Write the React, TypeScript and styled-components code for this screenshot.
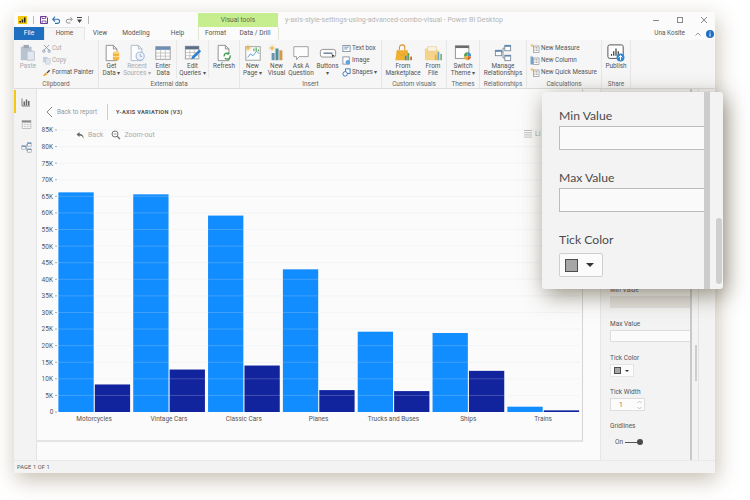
import React from 'react'
import styled, {createGlobalStyle} from 'styled-components'

const GlobalStyle = createGlobalStyle`
  html, body {
    margin: 0;
    background: #fff;
  }
  body {
    font-family: Roboto, "Liberation Sans", sans-serif;
    color: #555;
  }
`

const Stage = styled.div`
  width: 750px;
  height: 500px;
  padding: 12px 35px 27px 14px;
  box-sizing: border-box;
  overflow: hidden;
`

const Win = styled.div`
  position: relative;
  height: 100%;
  display: flex;
  flex-direction: column;
  background: #fbfbfb;
  box-shadow: 2px 7px 20px rgba(125, 105, 75, 0.42);
`

const TitleBar = styled.div`
  height: 15px;
  display: flex;
  align-items: stretch;
  flex: none;
`

const Quick = styled.div`
  width: 184px;
  padding-left: 4px;
  display: flex;
  align-items: center;
  gap: 4px;
  box-sizing: border-box;
`

const QuickBar = styled.span`
  width: 1px;
  height: 8px;
  margin: 0 2px;
  background: #bbb;
`

const ToolsTab = styled.div`
  width: 80px;
  margin-top: 1px;
  background: #c6ee8f;
  color: #5b6b4a;
  font-size: 6.6px;
  text-align: center;
  line-height: 15px;
`

const WinTitle = styled.div`
  width: 218px;
  padding-left: 7px;
  color: #b5b5b5;
  font-size: 7.05px;
  line-height: 15px;
  white-space: nowrap;
  box-sizing: border-box;
`

const Controls = styled.div`
  flex: 1;
  display: flex;
  justify-content: flex-end;
  align-items: center;
  gap: 16px;
  padding-right: 7px;
`

const TabRow = styled.div`
  height: 13px;
  display: flex;
  flex: none;
  font-size: 6.6px;
  line-height: 13px;
`

const Tab = styled.div<{$w: number; $active?: boolean; $file?: boolean}>`
  width: ${({$w}) => $w}px;
  text-align: center;
  color: ${({$file}) => ($file ? '#fff' : '#555')};
  background: ${({$active, $file}) => ($file ? '#1f6fc1' : $active ? '#f6f6f6' : 'transparent')};
  box-shadow: ${({$active}) => ($active ? 'inset 1px 1px 0 #e6e6e6, inset -1px 0 0 #e6e6e6' : 'none')};
`

const ToolTabs = styled.div`
  display: flex;
  border-left: 1px solid #dfe8d2;
  border-right: 1px solid #dfe8d2;
`

const User = styled.div`
  flex: 1;
  display: flex;
  justify-content: flex-end;
  align-items: center;
  gap: 5px;
  padding-right: 1px;
  font-size: 6.4px;
  color: #555;
`

const UserName = styled.span`
  margin-right: 5px;
`

const Ribbon = styled.div`
  height: 49px;
  display: flex;
  flex: none;
  background: #f6f6f6;
  border-bottom: 1px solid #dcdcdc;
  box-sizing: border-box;
`

const Group = styled.div<{$w: number}>`
  width: ${({$w}) => $w}px;
  flex: none;
  display: flex;
  flex-direction: column;
  border-right: 1px solid #e6e6e6;
  box-sizing: content-box;
`

const GroupBody = styled.div`
  flex: 1;
  display: flex;
  min-height: 0;
`

const GroupLabel = styled.div`
  height: 10px;
  font-size: 6.4px;
  line-height: 12px;
  text-align: center;
  color: #666;
  white-space: nowrap;
`

const Big = styled.div<{$w: number; $dim?: boolean; $rule?: boolean}>`
  width: ${({$w}) => $w}px;
  flex: none;
  padding-top: 4px;
  display: flex;
  flex-direction: column;
  align-items: center;
  box-sizing: border-box;
  font-size: 6.4px;
  line-height: 7.4px;
  text-align: center;
  white-space: nowrap;
  color: ${({$dim}) => ($dim ? '#aaa' : '#555')};
  border-left: ${({$rule}) => ($rule ? '1px solid #e8e8e8' : 'none')};
  svg {
    flex: none;
    margin-bottom: 1px;
  }
`

const SmallList = styled.div<{$w: number; $pad?: number}>`
  width: ${({$w}) => $w}px;
  flex: none;
  padding: 2px 0 0 ${({$pad}) => $pad ?? 0}px;
  box-sizing: border-box;
`

const SmallItem = styled.div<{$dim?: boolean}>`
  height: 12px;
  display: flex;
  align-items: center;
  gap: 1px;
  font-size: 6.3px;
  white-space: nowrap;
  color: ${({$dim}) => ($dim ? '#aaa' : '#555')};
`

const Main = styled.div`
  flex: 1;
  display: flex;
  min-height: 0;
`

const Nav = styled.div`
  width: 23px;
  flex: none;
  padding-top: 1px;
  background: #f3f3f3;
  display: flex;
  flex-direction: column;
  align-items: center;
  border-right: 1px solid #e4e4e4;
  box-sizing: border-box;
`

const NavItem = styled.div<{$active?: boolean}>`
  width: 100%;
  height: 23px;
  display: flex;
  align-items: center;
  justify-content: center;
  box-sizing: border-box;
  border-left: 2px solid ${({$active}) => ($active ? '#f2c811' : 'transparent')};
`

const Canvas = styled.div`
  width: 563px;
  flex: none;
`

const Frame = styled.div`
  width: 546px;
  height: 353px;
  display: flex;
  flex-direction: column;
  border-right: 1px solid #d4d4d4;
  border-bottom: 2px solid #e4e4e4;
  box-sizing: border-box;
`

const Crumb = styled.div`
  height: 36px;
  flex: none;
  display: flex;
  align-items: center;
  padding: 10px 0 0 9px;
  box-sizing: border-box;
  font-size: 6.4px;
  color: #999;
`

const CrumbBack = styled.svg`
  margin-right: 4px;
`

const CrumbRule = styled.span`
  width: 1px;
  height: 16px;
  margin: 0 8px 0 10px;
  background: #ccc;
`

const CrumbTitle = styled.span`
  font-size: 5.6px;
  font-weight: 700;
  letter-spacing: 0.3px;
  color: #555;
`

const ChartArea = styled.div`
  position: relative;
  flex: 1;
  min-height: 0;
`

const ChartTools = styled.div`
  position: absolute;
  left: 39px;
  top: 5px;
  display: flex;
  align-items: center;
  gap: 3px;
  font-size: 7px;
  color: #aaa;
`

const ChartToolGap = styled.span`
  width: 2px;
`

const LegendTool = styled.div`
  position: absolute;
  left: 487px;
  top: 5px;
  display: flex;
  align-items: center;
  gap: 3px;
  font-size: 7px;
  color: #aaa;
`

const PanelWrap = styled.div`
  flex: 1;
  display: flex;
  background: #f3f3f3;
  border-left: 1px solid #e6e6e6;
`

const Pane = styled.div`
  width: 89px;
  flex: none;
  padding: 196px 0 0 9px;
  box-sizing: border-box;
  font-size: 6.5px;
  color: #555;
`

const PaneLabel = styled.div`
  height: 10px;
  line-height: 10px;
  margin-bottom: 1px;
`

const PaneInput = styled.div<{$shade?: boolean}>`
  height: 12px;
  margin-bottom: 11px;
  border: 1px solid #dedede;
  border-right: 0;
  background: ${({$shade}) => ($shade ? '#e3e1dc' : '#fbfbfb')};
  box-sizing: border-box;
`

const SwatchButton = styled.div`
  width: 24px;
  height: 13px;
  display: flex;
  align-items: center;
  gap: 4px;
  padding-left: 3px;
  margin-bottom: 10px;
  background: #fcfcfc;
  border: 1px solid #e4e4e4;
  box-sizing: border-box;
`

const Swatch = styled.span<{$big?: boolean}>`
  width: ${({$big}) => ($big ? 13 : 7)}px;
  height: ${({$big}) => ($big ? 13 : 7)}px;
  background: #a6a6a6;
  border: 1px solid #4c4c4c;
  box-sizing: border-box;
`

const Caret = styled.span<{$big?: boolean}>`
  width: 0;
  height: 0;
  border-left: ${({$big}) => ($big ? 4 : 2)}px solid transparent;
  border-right: ${({$big}) => ($big ? 4 : 2)}px solid transparent;
  border-top: ${({$big}) => ($big ? 4 : 2)}px solid #333;
`

const Spinner = styled.div`
  width: 35px;
  height: 13px;
  display: flex;
  align-items: center;
  justify-content: space-between;
  padding: 0 2px 0 8px;
  margin-bottom: 10px;
  background: #fcfcfc;
  border: 1px solid #dedede;
  box-sizing: border-box;
  color: #c0604a;
  font-size: 6.8px;
`

const ToggleRow = styled.div`
  display: flex;
  align-items: center;
  line-height: 10px;
  padding: 5px 0 0 5px;
  gap: 2px;
`

const ToggleLine = styled.span`
  width: 13px;
  height: 1px;
  background: #555;
`

const ToggleKnob = styled.span`
  width: 6px;
  height: 6px;
  margin-left: -3px;
  border-radius: 50%;
  background: #4a4a4a;
`

const PaneStrip = styled.div`
  width: 2px;
  flex: none;
  background: #c9c9c9;
`

const PaneTrack = styled.div`
  width: 7px;
  flex: none;
  padding: 256px 1px 0 3px;
  border-right: 1px solid #e2e2e2;
  box-sizing: border-box;
`

const PaneThumb = styled.div`
  height: 36px;
  background: #cdcdcd;
`

const StatusBar = styled.div`
  height: 12px;
  flex: none;
  padding-left: 3px;
  font-size: 5.7px;
  line-height: 12px;
  letter-spacing: 0.1px;
  color: #555;
  background: #f3f3f3;
  border-top: 1px solid #e8e8e8;
`

const Popup = styled.div`
  position: absolute;
  left: 528px;
  top: 80px;
  width: 181px;
  height: 197px;
  display: flex;
  background: #f3f3f3;
  border-radius: 3px;
  box-shadow: 3px 6px 22px rgba(70, 60, 35, 0.55);
  overflow: hidden;
`

const PopupBody = styled.div`
  width: 162px;
  flex: none;
  padding: 14px 0 0 17px;
  box-sizing: border-box;
`

const PopupLabel = styled.div`
  height: 19px;
  font-family: Lato, Roboto, sans-serif;
  font-size: 12.2px;
  line-height: 19px;
  color: #4b4b4b;
`

const PopupInput = styled.div`
  height: 24px;
  margin: 1px 0 18px;
  background: #fafafa;
  border: 1px solid #bcbcbc;
  border-right: 0;
  box-sizing: border-box;
`

const PopupSwatchButton = styled.div`
  width: 44px;
  height: 24px;
  margin-top: 4px;
  padding-left: 5px;
  display: flex;
  align-items: center;
  gap: 8px;
  background: #fbfbfb;
  border: 1px solid #cfcfcf;
  border-radius: 2px;
  box-sizing: border-box;
`

const PopupStrip = styled.div`
  width: 6px;
  flex: none;
  background: #cccccc;
`

const PopupTrack = styled.div`
  flex: 1;
  display: flex;
  flex-direction: column;
  justify-content: flex-end;
  padding: 0 1px 5px 6px;
`

const PopupThumb = styled.div`
  height: 66px;
  border-radius: 3px;
  background: #cfcfcf;
`

const data = [
  {name: 'Motorcycles', a: 66.2, b: 8.3},
  {name: 'Vintage Cars', a: 65.6, b: 12.8},
  {name: 'Classic Cars', a: 59.2, b: 14},
  {name: 'Planes', a: 43, b: 6.6},
  {name: 'Trucks and Buses', a: 24.2, b: 6.3},
  {name: 'Ships', a: 23.8, b: 12.4},
  {name: 'Trains', a: 1.6, b: 0.5},
]

const ticks = Array.from({length: 18}, (_, i) => i * 5)

// chart svg starts at page x=37, y=125
const X0 = 21.4
const Y0 = 287
const STEP = 74.83
const yFor = (v: number) => Y0 - v * 3.318

const Chart = () => (
  <svg width={545} height={315} style={{display: 'block'}} fontFamily="Roboto, sans-serif" fontSize={6.5} fill="#555">
    {data.map((d, i) => (
      <g key={d.name}>
        <rect x={X0 + i * STEP} y={yFor(d.a)} width={35.3} height={Y0 - yFor(d.a)} fill="#118dff" />
        <rect x={X0 + 36.4 + i * STEP} y={yFor(d.b)} width={35.3} height={Y0 - yFor(d.b)} fill="#12239e" />
        <text x={X0 + 35.7 + i * STEP} y={295.5} textAnchor="middle">
          {d.name}
        </text>
      </g>
    ))}
    {ticks.map(t => (
      <g key={t}>
        {t > 0 && <line x1={21} x2={543} y1={yFor(t)} y2={yFor(t)} stroke="#d8e0e8" strokeOpacity={0.3} strokeWidth={0.8} />}
        <line x1={18} x2={20} y1={yFor(t)} y2={yFor(t)} stroke="#888" strokeWidth={0.7} />
        <text x={t === 0 ? 16.5 : 16} y={yFor(t) + 2.4} textAnchor="end">
          {t === 0 ? '0' : `${t}K`}
        </text>
      </g>
    ))}
  </svg>
)

const S = ({size = 18, children}: {size?: number; children: React.ReactNode}) => (
  <svg width={size} height={size} viewBox="0 0 20 20" fill="none" strokeWidth={1}>
    {children}
  </svg>
)

const Doc = ({stroke = '#8a8a8a'}: {stroke?: string}) => <path d="M3.500 1.500h8l4 4v13h-12z M11.500 1.500v4h4" stroke={stroke} fill="#fdfdfd" />

const PasteIcon = () => (
  <S>
    <rect x="2" y="3" width="12" height="15" fill="#b9c2cf" />
    <rect x="5" y="1" width="6" height="3.500" fill="#9ca7b6" />
    <path d="M9 8h8v10H9z" fill="#e3e8f0" stroke="#b9c2cf" />
  </S>
)
const GetDataIcon = () => (
  <S>
    <Doc />
    <rect x="11" y="9" width="7" height="9" rx="1.500" fill="#f3b33d" />
    <ellipse cx="14.500" cy="9.500" rx="3.500" ry="1.400" fill="#f8d78c" />
    <path d="M11 13.500c1 1 6 1 7 0" stroke="#fff" strokeWidth=".7" />
  </S>
)
const RecentIcon = () => (
  <S>
    <Doc stroke="#a9b7cb" />
    <circle cx="13.500" cy="13.500" r="4.500" fill="#eef3fa" stroke="#8fb0d6" />
    <path d="M13.500 11v2.700h2.200" stroke="#7a9cc5" strokeWidth=".8" />
  </S>
)
const TableIcon = ({size = 18, color = '#6e8fb5'}: {size?: number; color?: string}) => (
  <S size={size}>
    <rect x="2" y="3" width="16" height="14" fill="#fdfdfd" stroke="#9a9a9a" />
    <rect x="2" y="3" width="16" height="3.500" fill={color} />
    <path d="M2 10h16M2 13.500h16M7.300 6.500V17M12.600 6.500V17" stroke="#b5b5b5" strokeWidth=".8" />
  </S>
)
const EditIcon = () => (
  <S>
    <rect x="1.500" y="2.500" width="15" height="14" fill="#fdfdfd" stroke="#9a9a9a" />
    <rect x="1.500" y="2.500" width="15" height="3.500" fill="#5b6f8a" />
    <path d="M1.500 9.500h15M1.500 13h15M6.500 6v10.500M11.500 6v10.500" stroke="#b5b5b5" strokeWidth=".8" />
    <path d="M8 17l1-3 8-8 2 2-8 8z" fill="#2f7fd0" />
  </S>
)
const RefreshIcon = () => (
  <S>
    <Doc />
    <circle cx="13.500" cy="13.500" r="3.400" stroke="#3f9a4d" strokeWidth="1.400" strokeDasharray="8 2" fill="#fdfdfd" />
    <path d="M15.500 8.800v3h-3z" fill="#3f9a4d" />
  </S>
)
const Sun = ({x, y}: {x: number; y: number}) => (
  <g transform={`translate(${x} ${y})`}>
    <circle r="1.800" fill="#f0b43c" />
    <path d="M0-3.600v1.200M0 2.400v1.200M-3.600 0h1.200M2.400 0h1.200M-2.500-2.500l.8.8M1.700 1.700l.8.8M-2.500 2.500l.8-.8M1.700-1.700l.8-.8" stroke="#e9a92f" strokeWidth=".7" />
  </g>
)
const NewPageIcon = () => (
  <S>
    <rect x="2" y="3" width="16" height="15" fill="#fdfdfd" stroke="#9a9a9a" />
    <path d="M4 15l3-4 3 2 4-5 3 3" stroke="#4f9ad4" />
    <path d="M11 5v3M13.500 4v4M16 6v2" stroke="#5aa55a" strokeWidth="1.300" />
    <Sun x={4.500} y={4.500} />
  </S>
)
const NewVisualIcon = () => (
  <S>
    <rect x="4" y="10" width="3.400" height="8" fill="#6f93ad" />
    <rect x="8.300" y="5" width="3.400" height="13" fill="#4f8f98" />
    <rect x="12.600" y="7" width="3.400" height="11" fill="#d49a4a" />
    <Sun x={4.500} y={4.500} />
  </S>
)
const AskIcon = () => (
  <S>
    <path d="M2 3h16v11H8l-3 3.500V14H2z" fill="#fdfdfd" stroke="#9a9a9a" />
  </S>
)
const ButtonsIcon = () => (
  <S>
    <rect x="1.500" y="6" width="17" height="8.500" rx="2.500" fill="#fdfdfd" stroke="#8a8a8a" />
    <path d="M5 10.200h10" stroke="#5a6f8a" strokeWidth="1.400" />
    <path d="M14 11l1 4 1-1.500 1.600-.2z" fill="#333" />
  </S>
)
const TextBoxIcon = () => (
  <S size={9}>
    <rect x="2" y="3" width="16" height="14" fill="#fdfdfd" stroke="#6a7a8c" strokeWidth="1.600" />
    <path d="M5 7h10M5 11h7" stroke="#4d7fb0" strokeWidth="1.800" />
  </S>
)
const ImageIcon = () => (
  <S size={9}>
    <rect x="2" y="2" width="14" height="16" fill="#fdfdfd" stroke="#6a7a8c" strokeWidth="1.600" />
    <circle cx="13" cy="14" r="5" fill="#5ea4d8" />
  </S>
)
const ShapesIcon = () => (
  <S size={9}>
    <rect x="8" y="2" width="10" height="10" fill="#fdfdfd" stroke="#2f6fb0" strokeWidth="2" />
    <circle cx="7" cy="13" r="5" fill="#fdfdfd" stroke="#2f6fb0" strokeWidth="2" />
  </S>
)
const MarketIcon = () => (
  <S>
    <path d="M3 7h12l2 11H1.500z" fill="#f1b02f" />
    <path d="M6 7V4a3 3 0 0 1 6 0v3" stroke="#d8952a" strokeWidth="1.200" />
    <path d="M3 7l6 6 6-6" stroke="#d99a24" strokeWidth=".7" />
    <rect x="12" y="13" width="2" height="5" fill="#3f8fcc" />
    <rect x="15" y="10" width="2" height="8" fill="#5aa55a" />
    <rect x="18" y="14" width="2" height="4" fill="#d0683a" />
  </S>
)
const FolderIcon = () => (
  <S>
    <path d="M1 5h6l2 2h8v11H1z" fill="#f6d38a" />
    <path d="M4 3h10v5H4z" fill="#fbf3e0" stroke="#e0c486" strokeWidth=".6" />
    <rect x="12" y="12" width="2" height="6" fill="#e6b04a" />
    <rect x="15" y="9" width="2" height="9" fill="#6da9c9" />
    <rect x="18" y="11" width="2" height="7" fill="#7fb57f" />
  </S>
)
const ThemeIcon = () => (
  <S>
    <rect x="1.500" y="2" width="15" height="14" fill="#fdfdfd" stroke="#8a8a8a" />
    <rect x="1.500" y="2" width="15" height="2.500" fill="#6a6a6a" />
    <path d="M15 13V9a4.500 4.500 0 0 1 4 4.500z" fill="#3f8fcc" />
    <path d="M15 13.500l4 .5a4.500 4.500 0 0 1-4 4z" fill="#d8652e" />
    <path d="M15 13.500V18a4.500 4.500 0 0 1-4-4.500z" fill="#e9b33a" />
    <path d="M15 13.500h-4A4.500 4.500 0 0 1 15 9z" fill="#5aa55a" />
  </S>
)
const ModelIcon = ({size = 18}: {size?: number}) => (
  <S size={size}>
    <rect x="1.500" y="7" width="7" height="6" fill="#fdfdfd" stroke="#7a8a9c" />
    <rect x="12" y="1.500" width="6.500" height="6" fill="#fdfdfd" stroke="#7a8a9c" />
    <rect x="12" y="12.500" width="6.500" height="6" fill="#fdfdfd" stroke="#7a8a9c" />
    <path d="M12 1.500h6.500V3H12zM1.500 7h7v1.500h-7zM12 12.500h6.500V14H12z" fill="#4d7fb0" />
    <path d="M8.500 9H10V4.500h2M10 9v6.500h2" stroke="#7a8a9c" />
  </S>
)
const CalcIcon = ({sun = true}: {sun?: boolean}) => (
  <S size={10}>
    <rect x="7" y="6" width="11" height="13" fill="#fdfdfd" stroke="#7a7a7a" strokeWidth="1.200" />
    <path d="M9 9h7M9 12h7M9 15h7" stroke="#888" strokeWidth="1.400" strokeDasharray="2 1" />
    {sun ? <Sun x={4} y={5} /> : <rect x="1" y="3" width="5" height="16" fill="#7aa0c4" />}
  </S>
)
const PublishIcon = () => (
  <S>
    <rect x="1" y="1" width="17" height="15" rx="2" fill="#fdfdfd" stroke="#555" strokeWidth="1.100" />
    <path d="M5 13v-2M7.500 13V8M10 13V5M12.500 13V8" stroke="#333" strokeWidth="1.300" />
    <circle cx="15" cy="15" r="4.400" fill="#2f86d0" />
    <path d="M15 18v-5M13 15l2-2.200 2 2.200" stroke="#fff" strokeWidth="1.100" />
  </S>
)
const ReportNavIcon = () => (
  <S size={10}>
    <path d="M2 3v15h16" stroke="#666" strokeWidth="1.600" />
    <path d="M5 9h3v8H5zM9.500 5h3v12h-3zM14 8h3v9h-3z" fill="#666" />
  </S>
)

const App = () => (
  <Stage>
    <GlobalStyle />
    <Win>
      <TitleBar>
        <Quick>
          <svg width={9} height={8} viewBox="0 0 9 8">
            <rect width="9" height="8" fill="#f2c811" />
            <path d="M1.500 6.500V5h1.500v1.500zM3.700 6.500V3.500h1.500v3zM6 6.500V1.500h1.500v5z" fill="#222" />
          </svg>
          <QuickBar />
          <svg width={8} height={8} viewBox="0 0 8 8" fill="none">
            <path d="M.5.5h5.700l1.300 1.300v5.700H.5z" stroke="#6b3b96" />
            <path d="M2 .5h3.500v2H2zM2 7.500V5h4v2.500" stroke="#6b3b96" strokeWidth=".8" />
          </svg>
          <svg width={9} height={8} viewBox="0 0 9 8" fill="none">
            <path d="M1 3.200h4.500a2 2 0 0 1 0 4.200H3" stroke="#2f6fb0" strokeWidth="1.100" />
            <path d="M3 .7L.7 3.200 3 5.500" stroke="#2f6fb0" strokeWidth="1.100" />
          </svg>
          <svg width={8} height={8} viewBox="0 0 9 8" fill="none">
            <path d="M8 3.200H3.500a2 2 0 0 0 0 4.200H6" stroke="#888" />
            <path d="M6 .7l2.300 2.500L6 5.500" stroke="#888" />
          </svg>
          <svg width={5} height={6} viewBox="0 0 5 6">
            <path d="M0 0h5v1H0zM0 2.500h5L2.500 6z" fill="#444" />
          </svg>
          <QuickBar />
        </Quick>
        <ToolsTab>Visual tools</ToolsTab>
        <WinTitle>y-axis-style-settings-using-advanced-combo-visual - Power BI Desktop</WinTitle>
        <Controls>
          <svg width={8} height={8} viewBox="0 0 8 8">
            <path d="M1 4.500h6" stroke="#888" />
          </svg>
          <svg width={8} height={8} viewBox="0 0 8 8" fill="none">
            <rect x="1.500" y="1.500" width="5" height="5" stroke="#888" />
          </svg>
          <svg width={8} height={8} viewBox="0 0 8 8">
            <path d="M1 1l6 6M7 1L1 7" stroke="#888" />
          </svg>
        </Controls>
      </TitleBar>

      <TabRow>
        <Tab $w={30} $file>
          File
        </Tab>
        <Tab $w={41} $active>
          Home
        </Tab>
        <Tab $w={30}>View</Tab>
        <Tab $w={42}>Modeling</Tab>
        <Tab $w={41}>Help</Tab>
        <ToolTabs>
          <Tab $w={33}>Format</Tab>
          <Tab $w={46}>Data / Drill</Tab>
        </ToolTabs>
        <User>
          <UserName>Una Koslte</UserName>
          <svg width={6} height={4} viewBox="0 0 6 4" fill="none">
            <path d="M.5 3.500L3 1l2.500 2.500" stroke="#999" />
          </svg>
          <svg width={8} height={8} viewBox="0 0 8 8">
            <circle cx="4" cy="4" r="4" fill="#1f6fc1" />
            <path d="M4 3.300V6.500M4 1.500v1" stroke="#fff" />
          </svg>
        </User>
      </TabRow>

      <Ribbon>
        <Group $w={84}>
          <GroupBody>
            <Big $w={28} $dim>
              <PasteIcon />
              Paste
            </Big>
            <SmallList $w={56}>
              <SmallItem $dim>
                <svg width={9} height={9} viewBox="0 0 10 10" fill="none">
                  <path d="M2 1l6 6M8 1L2 7" stroke="#8f9cae" />
                  <circle cx="2" cy="8" r="1.300" stroke="#8f9cae" />
                  <circle cx="8" cy="8" r="1.300" stroke="#8f9cae" />
                </svg>
                Cut
              </SmallItem>
              <SmallItem $dim>
                <svg width={9} height={9} viewBox="0 0 10 10">
                  <rect x="1" y="1" width="5" height="6" fill="#c6d0dd" />
                  <rect x="4" y="3" width="5" height="6" fill="#dde4ed" stroke="#b5c0ce" strokeWidth=".5" />
                </svg>
                Copy
              </SmallItem>
              <SmallItem>
                <svg width={9} height={9} viewBox="0 0 10 10" fill="none">
                  <path d="M1 9l3-4 2 2-3 2z" fill="#e5a92f" />
                  <path d="M5 5l3-3 1 1-3 3z" fill="#444" />
                </svg>
                Format Painter
              </SmallItem>
            </SmallList>
          </GroupBody>
          <GroupLabel>Clipboard</GroupLabel>
        </Group>

        <Group $w={140}>
          <GroupBody>
            <Big $w={25}>
              <GetDataIcon />
              Get
              <br />
              Data ▾
            </Big>
            <Big $w={26} $dim>
              <RecentIcon />
              Recent
              <br />
              Sources ▾
            </Big>
            <Big $w={26}>
              <TableIcon />
              Enter
              <br />
              Data
            </Big>
            <Big $w={32} $rule>
              <EditIcon />
              Edit
              <br />
              Queries ▾
            </Big>
            <Big $w={31} $rule>
              <RefreshIcon />
              Refresh
            </Big>
          </GroupBody>
          <GroupLabel>External data</GroupLabel>
        </Group>

        <Group $w={141}>
          <GroupBody>
            <Big $w={25}>
              <NewPageIcon />
              New
              <br />
              Page ▾
            </Big>
            <Big $w={23}>
              <NewVisualIcon />
              New
              <br />
              Visual
            </Big>
            <Big $w={26}>
              <AskIcon />
              Ask A
              <br />
              Question
            </Big>
            <Big $w={27}>
              <ButtonsIcon />
              Buttons
              <br />▾
            </Big>
            <SmallList $w={40} $pad={1}>
              <SmallItem>
                <TextBoxIcon />
                Text box
              </SmallItem>
              <SmallItem>
                <ImageIcon />
                Image
              </SmallItem>
              <SmallItem>
                <ShapesIcon />
                Shapes ▾
              </SmallItem>
            </SmallList>
          </GroupBody>
          <GroupLabel>Insert</GroupLabel>
        </Group>

        <Group $w={64}>
          <GroupBody>
            <Big $w={42}>
              <MarketIcon />
              From
              <br />
              Marketplace
            </Big>
            <Big $w={18}>
              <FolderIcon />
              From
              <br />
              File
            </Big>
          </GroupBody>
          <GroupLabel>Custom visuals</GroupLabel>
        </Group>

        <Group $w={32}>
          <GroupBody>
            <Big $w={32}>
              <ThemeIcon />
              Switch
              <br />
              Theme ▾
            </Big>
          </GroupBody>
          <GroupLabel>Themes</GroupLabel>
        </Group>

        <Group $w={46}>
          <GroupBody>
            <Big $w={46}>
              <ModelIcon />
              Manage
              <br />
              Relationships
            </Big>
          </GroupBody>
          <GroupLabel>Relationships</GroupLabel>
        </Group>

        <Group $w={74}>
          <GroupBody>
            <SmallList $w={74} $pad={3}>
              <SmallItem>
                <CalcIcon />
                New Measure
              </SmallItem>
              <SmallItem>
                <CalcIcon sun={false} />
                New Column
              </SmallItem>
              <SmallItem>
                <CalcIcon />
                New Quick Measure
              </SmallItem>
            </SmallList>
          </GroupBody>
          <GroupLabel>Calculations</GroupLabel>
        </Group>

        <Group $w={28}>
          <GroupBody>
            <Big $w={28}>
              <PublishIcon />
              Publish
            </Big>
          </GroupBody>
          <GroupLabel>Share</GroupLabel>
        </Group>
      </Ribbon>

      <Main>
        <Nav>
          <NavItem $active>
            <ReportNavIcon />
          </NavItem>
          <NavItem>
            <TableIcon size={11} color="#8a8a8a" />
          </NavItem>
          <NavItem>
            <ModelIcon size={11} />
          </NavItem>
        </Nav>

        <Canvas>
          <Frame>
            <Crumb>
              <CrumbBack width={7} height={12} viewBox="0 0 7 12" fill="none">
                <path d="M6 1L1 6l5 5" stroke="#888" />
              </CrumbBack>
              Back to report
              <CrumbRule />
              <CrumbTitle>Y-AXIS VARIATION (V3)</CrumbTitle>
            </Crumb>
            <ChartArea>
              <Chart />
              <ChartTools>
                <svg width={9} height={9} viewBox="0 0 9 9" fill="none">
                  <path d="M3.500 1L.5 3.500l3 2.500V4.500c2 0 3.500 1 4 3.500 .5-3-1-5-4-5.300z" fill="#666" />
                </svg>
                Back
                <ChartToolGap />
                <svg width={10} height={10} viewBox="0 0 10 10" fill="none">
                  <circle cx="4" cy="4" r="3" stroke="#777" />
                  <path d="M6.200 6.200L9 9" stroke="#777" strokeWidth="1.300" />
                  <path d="M2.500 4h3" stroke="#777" strokeWidth=".7" />
                </svg>
                Zoom-out
              </ChartTools>
              <LegendTool>
                <svg width={8} height={8} viewBox="0 0 8 8">
                  <path d="M0 .5h8M0 2.700h8M0 4.900h8M0 7.100h8" stroke="#aaa" strokeWidth=".7" />
                </svg>
                Li
              </LegendTool>
            </ChartArea>
          </Frame>
        </Canvas>

        <PanelWrap>
          <Pane>
            <PaneLabel>Min Value</PaneLabel>
            <PaneInput $shade />
            <PaneLabel>Max Value</PaneLabel>
            <PaneInput />
            <PaneLabel>Tick Color</PaneLabel>
            <SwatchButton>
              <Swatch />
              <Caret />
            </SwatchButton>
            <PaneLabel>Tick Width</PaneLabel>
            <Spinner>
              1
              <svg width={5} height={10} viewBox="0 0 5 10" fill="none">
                <path d="M.5 3L2.500 1l2 2M.5 7l2 2 2-2" stroke="#aaa" strokeWidth=".7" />
              </svg>
            </Spinner>
            <PaneLabel>Gridlines</PaneLabel>
            <ToggleRow>
              On
              <ToggleLine />
              <ToggleKnob />
            </ToggleRow>
          </Pane>
          <PaneStrip />
          <PaneTrack>
            <PaneThumb />
          </PaneTrack>
        </PanelWrap>
      </Main>

      <StatusBar>PAGE 1 OF 1</StatusBar>

      <Popup>
        <PopupBody>
          <PopupLabel>Min Value</PopupLabel>
          <PopupInput />
          <PopupLabel>Max Value</PopupLabel>
          <PopupInput />
          <PopupLabel>Tick Color</PopupLabel>
          <PopupSwatchButton>
            <Swatch $big />
            <Caret $big />
          </PopupSwatchButton>
        </PopupBody>
        <PopupStrip />
        <PopupTrack>
          <PopupThumb />
        </PopupTrack>
      </Popup>
    </Win>
  </Stage>
)

export default App
